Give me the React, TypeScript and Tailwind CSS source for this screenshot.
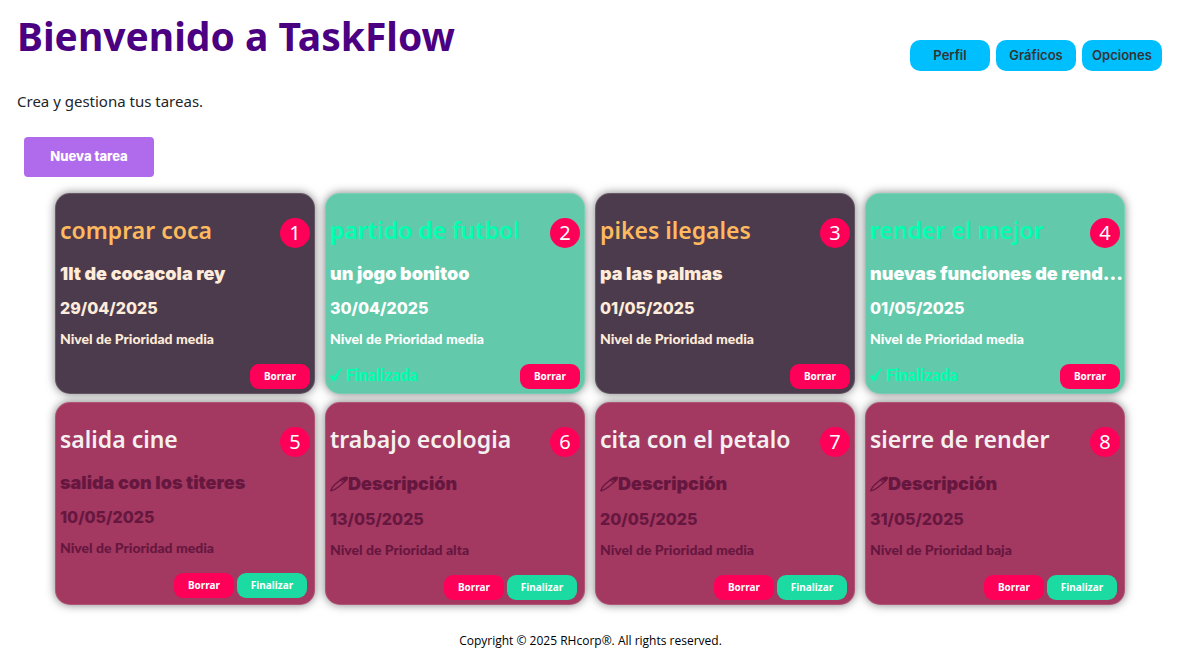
import React from "react";

type Status = "expired" | "done" | "pending";

interface Task {
  id: number;
  title: string;
  description?: string;
  date: string;
  priority: string;
  status: Status;
}

const tasks: Task[] = [
  { id: 1, title: "comprar coca", description: "1lt de cocacola rey", date: "29/04/2025", priority: "media", status: "expired" },
  { id: 2, title: "partido de futbol", description: "un jogo bonitoo", date: "30/04/2025", priority: "media", status: "done" },
  { id: 3, title: "pikes ilegales", description: "pa las palmas", date: "01/05/2025", priority: "media", status: "expired" },
  { id: 4, title: "render el mejor", description: "nuevas funciones de rend...", date: "01/05/2025", priority: "media", status: "done" },
  { id: 5, title: "salida cine", description: "salida con los titeres", date: "10/05/2025", priority: "media", status: "pending" },
  { id: 6, title: "trabajo ecologia", date: "13/05/2025", priority: "alta", status: "pending" },
  { id: 7, title: "cita con el petalo", date: "20/05/2025", priority: "media", status: "pending" },
  { id: 8, title: "sierre de render", date: "31/05/2025", priority: "baja", status: "pending" },
];

const cardStyles: Record<Status, { card: string; title: string }> = {
  expired: { card: "bg-[#4c3b4d] text-[#ffebd9]", title: "text-[#ffb95e]" },
  done: { card: "bg-[#62c9aa] text-white", title: "text-[#00ffb0]" },
  pending: { card: "bg-[#a33860] text-[#66173f]", title: "text-[#f5f0f0]" },
};

function PenIcon() {
  return (
    <svg viewBox="0 0 18 16" className="h-4 w-[18px] shrink-0" fill="none" stroke="currentColor" strokeWidth="1.2" strokeLinejoin="round" strokeLinecap="round" aria-hidden="true">
      <path d="M.8 14.8 C1.6 12.4 2.6 10.6 4.6 8.8 L11.4 3 C13.4 1.4 16.4 .6 17.2 1.4 C17.8 2.2 16.4 4.2 14.6 5.8 L8.4 11 C6 13 3.6 14 .8 14.8 Z" />
      <path d="M10.4 3.8 L13.6 6.6" />
      <path d="M11.4 3 C13.4 1.4 16.4 .6 17.2 1.4 C17.8 2.2 16.4 4.2 14.6 5.8 Z" fill="currentColor" stroke="none" />
    </svg>
  );
}

function CheckIcon() {
  return (
    <svg viewBox="0 0 12 14" className="h-3.5 w-3 shrink-0" fill="currentColor" stroke="currentColor" strokeWidth=".6" strokeLinejoin="round" aria-hidden="true">
      <path d="M.4 8.4 C1.2 7.2 2.8 7 3.4 8 L4.3 9.6 C6 6.2 8.4 2.6 10.8 .8 L11.6 1.2 C9.2 4.4 7.2 8.2 5.6 12.4 L3.2 13.2 C2.4 11.2 1.6 9.2 .4 8.4 Z" />
    </svg>
  );
}

function TaskCard({ task }: { task: Task }) {
  const style = cardStyles[task.status];
  const small = "h-[25px] rounded-[9px] text-[10px] font-bold text-white";
  return (
    <article className={`min-w-0 rounded-[15px] border border-white/15 p-1 shadow-[0_0_10px_rgba(0,0,0,0.5)] ${style.card}`}>
      <div className="mt-5 flex items-start justify-between">
        <h2 className={`text-[23px] leading-6 font-semibold ${style.title}`}>{task.title}</h2>
        <span className="flex size-[30px] shrink-0 items-center justify-center rounded-full bg-[#ff0059] text-[20px] leading-7 text-white">
          {task.id}
        </span>
      </div>
      {task.description ? (
        <h3 className="mt-[14px] font-['Inter'] text-[18px] leading-6 font-black whitespace-nowrap">{task.description}</h3>
      ) : (
        <h3 className="mt-[14px] flex items-center font-['Inter'] text-[18px] leading-[26px] font-black">
          <PenIcon />
          Descripción
        </h3>
      )}
      <p className="mt-3 font-['Inter'] text-[16px] leading-5 font-extrabold">{task.date}</p>
      <p className="mt-[11px] font-['Lato'] text-[14px] leading-5 font-black">Nivel de Prioridad {task.priority}</p>
      <div className={`mt-[15px] flex items-start gap-[3px] ${task.status === "pending" ? "pr-[3px]" : ""}`}>
        {task.status === "done" && (
          <p className="flex items-center gap-1 font-['Lato'] text-[16px] leading-[22px] font-black text-[#00ffb0]">
            <CheckIcon />
            Finalizada
          </p>
        )}
        <button type="button" className={`${small} ml-auto w-[60px] bg-[#ff0059]`}>Borrar</button>
        {task.status === "pending" && (
          <button type="button" className={`${small} w-[70px] bg-[#1bdba3]`}>Finalizar</button>
        )}
      </div>
    </article>
  );
}

export default function App() {
  return (
    <div className="bg-white font-['Noto_Sans',sans-serif] text-[#212529]">
      <header className="flex items-start justify-between pr-[19px] pl-[17px]">
        <h1 className="mt-4 text-[39px] leading-10 font-bold text-[#4b0082]">Bienvenido a TaskFlow</h1>
        <nav className="mt-10 flex gap-1.5">
          {["Perfil", "Gráficos", "Opciones"].map((label) => (
            <button key={label} type="button" className="h-[31px] w-20 rounded-[10px] bg-[#00bfff] font-['Inter'] text-[13px] font-semibold text-[#333333]">
              {label}
            </button>
          ))}
        </nav>
      </header>
      <main className="pr-px">
        <p className="mt-[18px] pl-[17px] text-[15px] leading-6">Crea y gestiona tus tareas.</p>
        <button type="button" className="mt-6 ml-6 block h-10 w-[130px] rounded-[4px] bg-[#b06bec] font-['Inter'] text-[13px] font-extrabold text-white">
          Nueva tarea
        </button>
        <section className="mx-auto mt-4 grid w-full max-w-[1070px] grid-cols-[repeat(auto-fit,minmax(250px,1fr))] gap-x-[10px] gap-y-2">
          {tasks.map((task) => (
            <TaskCard key={task.id} task={task} />
          ))}
        </section>
      </main>
      <footer className="mt-[26px] pb-1.5 text-center font-['Open_Sans'] text-[12px] leading-5 text-black">
        Copyright © 2025 RHcorp®. All rights reserved.
      </footer>
    </div>
  );
}
